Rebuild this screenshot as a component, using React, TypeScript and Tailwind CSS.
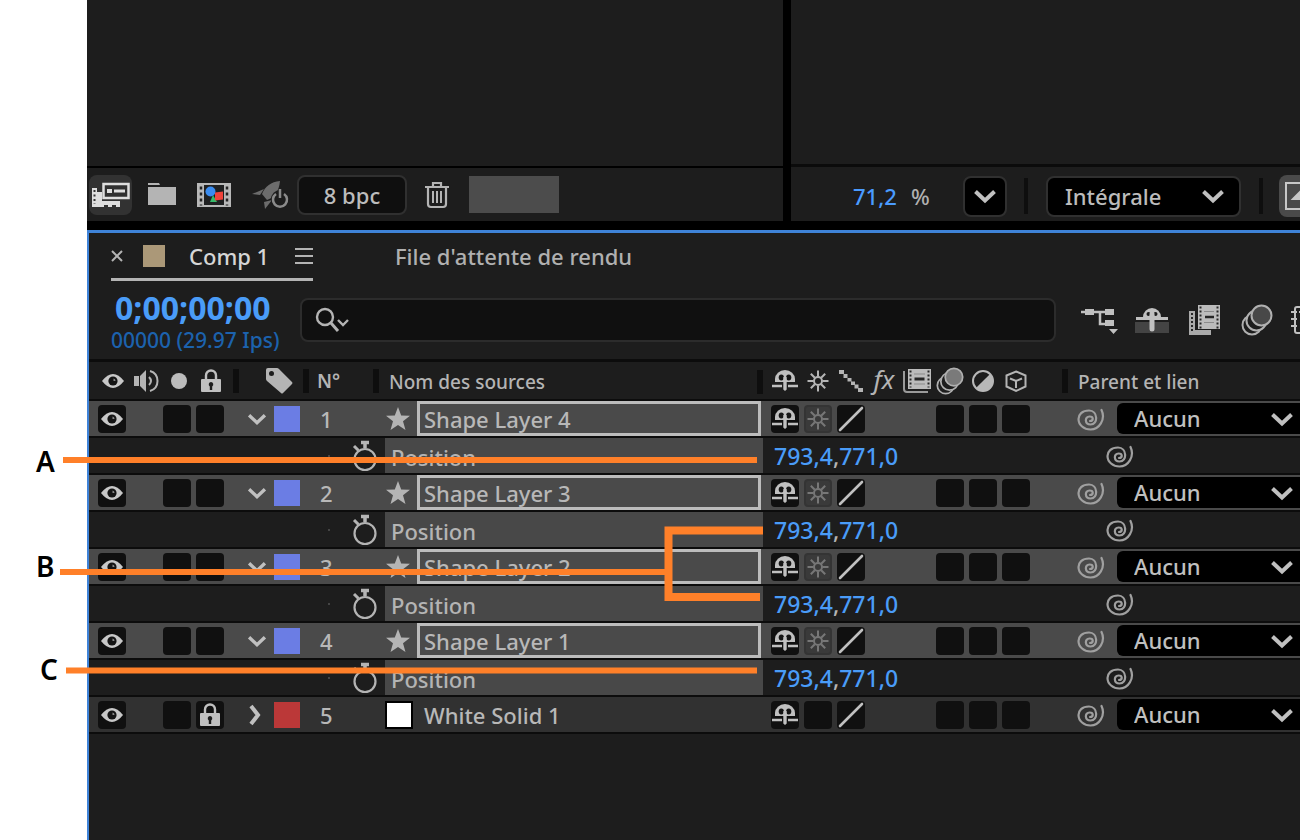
import { useState, type ReactNode } from "react"

/* ----------------------------------------------------------------
 * Data
 * ---------------------------------------------------------------- */

type Layer = {
  id: number
  name: string
  kind: "shape" | "solid"
  position?: [string, string]
}

const layers: Layer[] = [
  { id: 1, name: "Shape Layer 4", kind: "shape", position: ["793,4", "771,0"] },
  { id: 2, name: "Shape Layer 3", kind: "shape", position: ["793,4", "771,0"] },
  { id: 3, name: "Shape Layer 2", kind: "shape", position: ["793,4", "771,0"] },
  { id: 4, name: "Shape Layer 1", kind: "shape", position: ["793,4", "771,0"] },
  { id: 5, name: "White Solid 1", kind: "solid" },
]

/* ----------------------------------------------------------------
 * Icons
 * ---------------------------------------------------------------- */

function EyeIcon() {
  return (
    <svg width="24" height="18" viewBox="0 0 24 18" aria-hidden="true">
      <path d="M1 9Q12-5 23 9Q12 23 1 9Z" fill="#c8c8c8" />
      <circle cx="12" cy="9" r="4.600" fill="#141414" />
      <path d="M12.500 9V6.500A2.500 2.500 0 0 1 14.500 9z" fill="#888" />
    </svg>
  )
}

function SpeakerIcon() {
  return (
    <svg width="28" height="24" viewBox="0 0 28 24" fill="none" stroke="#b4b4b4" strokeWidth="2" aria-hidden="true">
      <path d="M1 7h5v10H1z" fill="#b4b4b4" stroke="none" />
      <path d="M7 7l6-6v22l-6-6z" fill="#b4b4b4" stroke="none" />
      <path d="M16 8q4 4 0 8" />
      <path d="M17 2c10 3 10 17 0 20" />
    </svg>
  )
}

function LockIcon() {
  return (
    <svg width="22" height="24" viewBox="0 0 22 24" aria-hidden="true">
      <path d="M6 11V6.500a5 5 0 0 1 10 0V11" fill="none" stroke="#c0c0c0" strokeWidth="2.400" />
      <rect x="1" y="10" width="20" height="13" rx="1" fill="#c0c0c0" />
      <path d="M11 13a2.400 2.400 0 0 1 1.200 4.400V21H9.800v-3.600A2.400 2.400 0 0 1 11 13z" fill="#1c1c1c" />
    </svg>
  )
}

function TagIcon() {
  return (
    <svg width="28" height="28" viewBox="0 0 28 28" aria-hidden="true">
      <path d="M1 3q0-2 2-2h9q1 0 2 1l13 13q1 1 0 2l-9 9q-1 1-2 0L2 14q-1-1-1-2z" fill="#b4b4b4" />
      <circle cx="6.500" cy="6.500" r="2.500" fill="#1d1d1d" />
    </svg>
  )
}

function ShyIcon() {
  return (
    <svg width="28" height="24" viewBox="0 0 28 24" aria-hidden="true">
      <path d="M4 13V10a10 9 0 0 1 20 0v3z" fill="#c0c0c0" />
      <ellipse cx="10.300" cy="8.500" rx="2.600" ry="3" fill="#151515" />
      <ellipse cx="17.700" cy="8.500" rx="2.600" ry="3" fill="#151515" />
      <path d="M12.300 8h3.400v12.500l-1.700 1.500-1.700-1.500z" fill="#c0c0c0" />
      <path d="M1 17h10M17 17h10" stroke="#c0c0c0" strokeWidth="2.400" />
    </svg>
  )
}

function SunIcon({ dim = false }: { dim?: boolean }) {
  return (
    <svg width="24" height="24" viewBox="0 0 24 24" fill="none" stroke={dim ? "#777" : "#b4b4b4"} strokeWidth="2" aria-hidden="true">
      <circle cx="12" cy="12" r="4" />
      <path d="M12 1.500v6M12 16.500v6M1.500 12h6M16.500 12h6M4.800 4.800l4 4M15.200 15.200l4 4M19.200 4.800l-4 4M8.800 15.200l-4 4" />
    </svg>
  )
}

function QualityIcon() {
  return (
    <svg width="26" height="26" viewBox="0 0 26 26" fill="#b4b4b4" aria-hidden="true">
      <path d="M1 2h5v4H1zM5.500 6h4v4h-4zM9.500 10h4v3.500h-4zM13 13.500h4V17h-4zM16.500 16.500h4v4h-4zM20 20h5v4h-5z" />
    </svg>
  )
}

function SlashIcon() {
  return (
    <svg width="26" height="26" viewBox="0 0 26 26" aria-hidden="true">
      <path d="M2 24L24 2" stroke="#c0c0c0" strokeWidth="2.600" strokeLinecap="round" />
    </svg>
  )
}

function FrameBlendIcon() {
  return (
    <svg width="28" height="26" viewBox="0 0 28 26" aria-hidden="true">
      <path d="M1 3v18q0 3 3 3h21" fill="none" stroke="#9a9a9a" strokeWidth="2" />
      <path d="M5 1h23v20H5z" fill="#bcbcbc" />
      <path d="M7.500 2.500v17M25.500 2.500v17" stroke="#262626" strokeWidth="2" strokeDasharray="2 2" />
      <path d="M11.500 11h10" stroke="#262626" strokeWidth="3" />
      <path d="M11 6h11M11 16h11" stroke="#8b8b8b" strokeWidth="1" />
    </svg>
  )
}

function FilmStackIcon() {
  return (
    <svg width="33" height="33" viewBox="0 0 33 33" aria-hidden="true">
      <path d="M1 7h6v19h16v5H1z" fill="#aaa" />
      <path d="M4 9v20" stroke="#262626" strokeWidth="2" strokeDasharray="2 2" />
      <path d="M9 0h24v26H9z" fill="#1d1d1d" />
      <path d="M10 1h22v24H10z" fill="#bcbcbc" />
      <path d="M12.500 2.500v22M29.500 2.500v22" stroke="#262626" strokeWidth="2" strokeDasharray="2 2" />
      <path d="M17 13h9" stroke="#262626" strokeWidth="2.500" />
      <path d="M16 7.500h10M16 18.500h10" stroke="#8b8b8b" strokeWidth="1" />
    </svg>
  )
}

function MotionBlurIcon({ large = false }: { large?: boolean }) {
  return (
    <svg width={large ? 32 : 28} height={large ? 32 : 28} viewBox="0 0 32 32" stroke="#b0b0b0" strokeWidth="2" aria-hidden="true">
      <circle cx="11" cy="21" r="9.500" fill="#1d1d1d" />
      <circle cx="15.500" cy="16.500" r="10" fill="#1d1d1d" />
      <circle cx="20.500" cy="11.500" r="10" fill={large ? "#484848" : "#7a7a7a"} />
    </svg>
  )
}

function AdjustmentIcon() {
  return (
    <svg width="24" height="24" viewBox="0 0 24 24" aria-hidden="true">
      <circle cx="12" cy="12" r="10" fill="#1d1d1d" stroke="#b8b8b8" strokeWidth="2" />
      <path d="M19.100 4.900A10 10 0 0 1 4.900 19.100z" fill="#b8b8b8" />
    </svg>
  )
}

function CubeIcon() {
  return (
    <svg width="24" height="24" viewBox="0 0 24 24" fill="none" stroke="#b4b4b4" strokeWidth="2" aria-hidden="true">
      <path d="M12 2.500l9.500 4v11L12 22l-9.500-4.500v-11zM6 9.500l6 2.500 6-2.500M12 12v7" />
    </svg>
  )
}

function PickWhipIcon() {
  return (
    <svg width="28" height="26" viewBox="0 0 28 26" fill="none" stroke="#a0a0a0" strokeWidth="2.200" strokeLinecap="round" aria-hidden="true">
      <path d="M13 15c3.500 0 4-4.500-.5-4.500-5 0-5 8 1 8 8 0 7.500-14-1.500-14C5 4.500 1.500 8.500 1.500 13c0 6 5.500 10.500 12 10.500C22 23.500 29 13.500 24.500 4" />
    </svg>
  )
}

function StopwatchIcon() {
  return (
    <svg width="26" height="32" viewBox="0 0 26 32" fill="none" stroke="#b4b4b4" aria-hidden="true">
      <circle cx="13" cy="19.500" r="10.500" strokeWidth="2.200" />
      <path d="M9 2.500h8M13 3v5" strokeWidth="3.500" />
      <path d="M2 6l4.500 4.500" strokeWidth="3" />
    </svg>
  )
}

function StarIcon() {
  return (
    <svg width="26" height="26" viewBox="0 0 26 26" aria-hidden="true">
      <path d="M13 1l3.200 8.500 8.800.3-7 5.500 2.500 8.700L13 19l-7.500 5L8 15.300 1 9.800l8.800-.3z" fill="#b4b4b4" />
    </svg>
  )
}

function Chevron({ small = false, right = false }: { small?: boolean; right?: boolean }) {
  return (
    <svg width={small ? 20 : 24} height={small ? 20 : 24} viewBox="0 0 24 24" fill="none" stroke="#c0c0c0" strokeWidth="4" aria-hidden="true">
      {right ? <path d="M4 3l7 9-7 9" /> : <path d="M2.500 7.500l9.500 9 9.500-9" />}
    </svg>
  )
}

function ProjectCompIcon() {
  return (
    <svg width="40" height="28" viewBox="0 0 40 28" aria-hidden="true">
      <path d="M1 7h5v4h5v9h18v6h-4v-2h-4v2h-4v-2h-4v2H1z" fill="#dedede" />
      <path d="M3.500 9v14" stroke="#333" strokeWidth="2" strokeDasharray="2 2.500" />
      <rect x="12.500" y="3" width="25" height="14" fill="#303030" stroke="#dedede" strokeWidth="2.500" />
      <path d="M16 8h5v4h-5zM23 8.500h11v3H23z" fill="#dedede" />
    </svg>
  )
}

function FolderIcon() {
  return (
    <svg width="30" height="26" viewBox="0 0 30 26" fill="#b4b4b4" aria-hidden="true">
      <path d="M1 1h11l1 2H1zM1 5h28v18H1z" />
    </svg>
  )
}

function ColorFilmIcon() {
  return (
    <svg width="34" height="24" viewBox="0 0 34 24" aria-hidden="true">
      <path d="M1 1h32v22H1z" fill="#1f2021" stroke="#b8b8b8" strokeWidth="2" />
      <path d="M1 1h6v22H1zM27 1h6v22h-6z" fill="#b8b8b8" />
      <path d="M4 3.500v19M30 3.500v19" stroke="#222" strokeWidth="2.500" strokeDasharray="3 3" />
      <path d="M16 12l4 7h-7z" fill="#35b96a" />
      <circle cx="13.500" cy="8.500" r="5" fill="#3a8cf0" />
      <path d="M18 9.500l8-1v8l-8 1z" fill="#f0433a" />
    </svg>
  )
}

function RocketIcon() {
  return (
    <svg width="38" height="30" viewBox="0 0 38 30" aria-hidden="true">
      <path d="M29 1c-9 1-15 5-18 13l5 6c8-3 12-9 13-19z" fill="#6c6c6c" />
      <path d="M13 9L1 14l8 1zM13 22l1 7 7-9z" fill="#6c6c6c" />
      <circle cx="29" cy="19" r="9" fill="#1d1d1d" />
      <path d="M25 14a7 7 0 1 0 8 0M29 9v9" fill="none" stroke="#8b8b8b" strokeWidth="2.500" />
    </svg>
  )
}

function TrashIcon() {
  return (
    <svg width="24" height="28" viewBox="0 0 24 28" fill="none" stroke="#b4b4b4" strokeWidth="2.200" aria-hidden="true">
      <path d="M0 6h24M8 5V2h8v3M3 7v16q0 3 3 3h12q3 0 3-3V7" />
      <path d="M8 10v12M12 10v12M16 10v12" strokeWidth="2" />
    </svg>
  )
}

function FlowchartIcon() {
  return (
    <svg width="38" height="32" viewBox="0 0 38 32" fill="#c0c0c0" aria-hidden="true">
      <path d="M0 8h26M19 8v12h6" fill="none" stroke="#c0c0c0" strokeWidth="2.500" />
      <path d="M4 5h9v6H4zM24 5h9v6h-9zM24 16h9v6h-9zM28 25h9l-4.500 5z" />
    </svg>
  )
}

function ShyToolIcon() {
  return (
    <svg width="36" height="32" viewBox="0 0 36 32" aria-hidden="true">
      <path d="M1 18h34v11H1z" fill="#444" />
      <path d="M9 13a9 9 0 0 1 18 0z" fill="#c0c0c0" />
      <circle cx="14.500" cy="10" r="2" fill="#1d1d1d" />
      <circle cx="21.500" cy="10" r="2" fill="#1d1d1d" />
      <path d="M2 14.500h32" stroke="#c0c0c0" strokeWidth="3" />
      <path d="M18 10v15" stroke="#c0c0c0" strokeWidth="5" strokeLinecap="round" />
    </svg>
  )
}

function GraphIcon() {
  return (
    <svg width="32" height="32" viewBox="0 0 32 32" fill="none" stroke="#c0c0c0" strokeWidth="2" aria-hidden="true">
      <rect x="4" y="3" width="25" height="26" rx="2" />
      <path d="M0 8h6M0 15h6M0 22h6M10 1v5M17 1v5M8 8h10" />
    </svg>
  )
}

/* ----------------------------------------------------------------
 * Shared pieces
 * ---------------------------------------------------------------- */

function Switch({ label, dim = false, children }: { label: string; dim?: boolean; children?: ReactNode }) {
  return (
    <button
      aria-label={label}
      className={
        dim
          ? "flex size-7 shrink-0 items-center justify-center rounded border-2 border-[#343434] bg-[#3a3a3a]"
          : "flex size-7 shrink-0 items-center justify-center rounded bg-[#101010]"
      }
    >
      {children}
    </button>
  )
}

function Separator() {
  return <span className="h-6 w-1.5 shrink-0 bg-[#0e0e0e]" />
}

/* ----------------------------------------------------------------
 * Top panels
 * ---------------------------------------------------------------- */

function ProjectPanel() {
  return (
    <section className="flex w-[696px] flex-col bg-[#1d1d1d]">
      <div className="h-[166px]" />
      <div className="flex h-[55px] items-center border-t-2 border-black pl-0.5">
        <button aria-label="Interpréter un métrage" className="flex h-10 w-[43px] items-center justify-center rounded-lg bg-[#323232]">
          <ProjectCompIcon />
        </button>
        <button aria-label="Nouveau dossier" className="ml-[15px]"><FolderIcon /></button>
        <button aria-label="Nouvelle composition" className="ml-5"><ColorFilmIcon /></button>
        <button aria-label="Accélération" className="ml-5"><RocketIcon /></button>
        <button className="ml-2 h-10 w-[110px] rounded-lg border-2 border-[#303030] bg-[#0f0f0f] text-[#bcbcbc]">
          8 bpc
        </button>
        <button aria-label="Supprimer" className="ml-[18px]"><TrashIcon /></button>
        <div className="ml-5 h-[37px] w-[90px] bg-[#4c4c4c]" />
      </div>
    </section>
  )
}

function ViewerPanel() {
  return (
    <section className="flex min-w-0 flex-1 flex-col overflow-hidden bg-[#1d1d1d]">
      <div className="h-[164px]" />
      <div className="flex h-[57px] items-center border-t-3 border-[#0b0b0b] pt-1 pl-[62px]">
        <button className="w-12 shrink-0 text-left text-[#4a9bff]">71,2</button>
        <span className="ml-2.5 w-6 shrink-0 text-[#b0b0b0]">%</span>
        <button aria-label="Zoom" className="ml-7 flex h-[41px] w-11 shrink-0 items-center justify-center rounded-lg border-2 border-[#303030] bg-black">
          <Chevron />
        </button>
        <span className="ml-[17px] h-9 w-1 shrink-0 bg-[#0e0e0e]" />
        <div className="relative ml-[18px] shrink-0">
          <select aria-label="Résolution" className="block h-[41px] w-[195px] appearance-none rounded-lg border-2 border-[#303030] bg-black pl-[17px] text-[#bcbcbc]">
            <option>Intégrale</option>
          </select>
          <span className="pointer-events-none absolute top-2 right-4"><Chevron /></span>
        </div>
        <span className="ml-[18px] h-9 w-1 shrink-0 bg-[#0e0e0e]" />
        <button aria-label="Région ciblée" className="ml-4 flex h-[42px] w-11 shrink-0 items-center rounded-lg bg-[#4a4a4a] pl-1.5">
          <svg width="30" height="28" viewBox="0 0 30 28" fill="none" stroke="#c8c8c8" strokeWidth="2" aria-hidden="true">
            <path d="M1 1h28v26H1z" />
            <path d="M8 17l7-7 7 7z" fill="#c8c8c8" />
          </svg>
        </button>
      </div>
    </section>
  )
}

/* ----------------------------------------------------------------
 * Timeline
 * ---------------------------------------------------------------- */

function TimelineTabs() {
  return (
    <div className="flex h-[48px] items-end pl-[22px]">
      <div className="flex h-full w-[202px] items-center border-b-3 border-[#b4b4b4]">
        <button aria-label="Fermer" className="flex w-3 justify-center">
          <svg width="12" height="12" viewBox="0 0 12 12" stroke="#b4b4b4" strokeWidth="2" aria-hidden="true">
            <path d="M1 1l10 10M11 1L1 11" />
          </svg>
        </button>
        <span className="ml-5 size-[22px] bg-[#ab9878]" />
        <button className="ml-6 text-[#d6d6d6]">Comp 1</button>
        <button aria-label="Menu du panneau" className="ml-auto">
          <svg width="18" height="18" viewBox="0 0 18 18" stroke="#b4b4b4" strokeWidth="2" aria-hidden="true">
            <path d="M0 2h18M0 9h18M0 16h18" />
          </svg>
        </button>
      </div>
      <button className="ml-[82px] h-full pb-[3px] text-[#b0b0b0]">File d'attente de rendu</button>
    </div>
  )
}

function TimelineToolbar() {
  return (
    <div className="flex h-[78px] items-center overflow-hidden">
      <div className="w-[211px] shrink-0 pt-2 pl-[22px]">
        <button className="block pl-1 text-[32px] leading-8 font-bold text-[#4a9cf8]">0;00;00;00</button>
        <div className="text-[21px] leading-8 whitespace-nowrap text-[#1c62ad]">00000 (29.97 Ips)</div>
      </div>
      <label className="flex h-11 w-[756px] shrink-0 items-center rounded-lg border-2 border-[#2c2c2c] bg-[#101010] pl-3">
        <svg width="36" height="28" viewBox="0 0 36 28" fill="none" stroke="#b4b4b4" strokeWidth="2.400" aria-hidden="true">
          <circle cx="11" cy="11" r="8" />
          <path d="M17 17l7 8" strokeWidth="3" />
          <path d="M24 14l5 5 5-5" />
        </svg>
        <input aria-label="Rechercher" className="min-w-0 flex-1 bg-transparent text-[#b8b8b8] outline-none" />
      </label>
      <div className="ml-[25px] flex shrink-0 items-center">
        <button aria-label="Mini-diagramme"><FlowchartIcon /></button>
        <button aria-label="Masquer les calques discrets" className="ml-[15px]"><ShyToolIcon /></button>
        <button aria-label="Fusion d'images" className="ml-[18px]"><FilmStackIcon /></button>
        <button aria-label="Flou de mouvement" className="ml-5"><MotionBlurIcon large /></button>
        <button aria-label="Éditeur de graphiques" className="ml-[18px]"><GraphIcon /></button>
      </div>
    </div>
  )
}

function HeaderRow() {
  return (
    <tr className="text-left text-[19px] leading-6 text-[#b4b4b4]">
      <th className="h-[39px] border-b-2 border-[#0c0c0c] p-0 font-medium">
        <div className="flex items-center pl-3">
          <EyeIcon />
          <span className="ml-2"><SpeakerIcon /></span>
          <span className="ml-2.5 size-4 rounded-full bg-[#bcbcbc]" />
          <span className="ml-[13px]"><LockIcon /></span>
          <span className="mr-1.5 ml-auto flex"><Separator /></span>
        </div>
      </th>
      <th className="border-b-2 border-[#0c0c0c] p-0 font-medium">
        <div className="pl-5"><TagIcon /></div>
      </th>
      <th className="border-b-2 border-[#0c0c0c] p-0 font-medium">
        <div className="flex items-center pl-[3px]">
          <Separator />
          <span className="ml-2 font-semibold">N°</span>
          <span className="mr-1.5 ml-auto flex"><Separator /></span>
        </div>
      </th>
      <th className="border-b-2 border-[#0c0c0c] p-0 font-medium">
        <div className="flex items-center justify-between pt-0.5 pl-1">
          Nom des sources
          <Separator />
        </div>
      </th>
      <th className="border-b-2 border-[#0c0c0c] p-0 font-medium">
        <div className="flex items-center gap-[5px] pl-2">
          <span className="flex w-7 justify-center"><ShyIcon /></span>
          <span className="flex w-7 justify-center"><SunIcon /></span>
          <span className="flex w-7 justify-center"><QualityIcon /></span>
          <span className="w-7 pb-1 text-center text-[26px] font-normal italic">fx</span>
          <span className="flex w-7 justify-center"><FrameBlendIcon /></span>
          <span className="flex w-7 justify-center"><MotionBlurIcon /></span>
          <span className="flex w-7 justify-center"><AdjustmentIcon /></span>
          <span className="flex w-7 justify-center"><CubeIcon /></span>
          <span className="ml-auto flex"><Separator /></span>
        </div>
      </th>
      <th className="border-b-2 border-[#0c0c0c] p-0 pt-0.5 pl-2.5 font-medium">Parent et lien</th>
    </tr>
  )
}

function LayerRow({ layer }: { layer: Layer }) {
  const [name, setName] = useState(layer.name)
  const isShape = layer.kind === "shape"

  return (
    <tr className={isShape ? "bg-[#4a4a4a] text-[#b8b8b8]" : "bg-[#313131] text-[#b8b8b8]"}>
      <td className="h-[37px] border-b-2 border-[#0c0c0c] p-0">
        <div className="flex items-center pl-[9px]">
          <Switch label="Visibilité"><EyeIcon /></Switch>
          <span className="ml-[37px] flex gap-[5px]">
            <Switch label="Solo" />
            <Switch label="Verrouiller">{!isShape && <LockIcon />}</Switch>
          </span>
        </div>
      </td>
      <td className="border-b-2 border-[#0c0c0c] p-0">
        <div className="flex items-center justify-between pl-0.5">
          <button aria-label="Développer"><Chevron small={isShape} right={!isShape} /></button>
          <span className={isShape ? "size-[26px] bg-[#6b7de4]" : "size-[26px] bg-[#bb3838]"} />
        </div>
      </td>
      <td className="border-b-2 border-[#0c0c0c] p-0 pl-5">{layer.id}</td>
      <td className="border-b-2 border-[#0c0c0c] p-0">
        {isShape ? (
          <div className="flex items-center gap-1.5 pr-0.5">
            <StarIcon />
            <input
              aria-label="Nom du calque"
              value={name}
              onChange={(e) => setName(e.target.value)}
              className="h-[35px] min-w-0 flex-1 border-3 border-[#bcbcbc] bg-transparent pl-1 outline-none"
            />
          </div>
        ) : (
          <div className="flex items-center">
            <span className="size-7 border-2 border-black bg-white" />
            <span className="ml-[11px]">{layer.name}</span>
          </div>
        )}
      </td>
      <td className="border-b-2 border-[#0c0c0c] p-0">
        <div className="flex gap-[5px] pl-2">
          <Switch label="Discret"><ShyIcon /></Switch>
          <Switch label="Pixellisation" dim={isShape}>{isShape && <SunIcon dim />}</Switch>
          <Switch label="Qualité"><SlashIcon /></Switch>
          <span className="ml-[66px] flex gap-[5px]">
            <Switch label="Flou de mouvement" />
            <Switch label="Calque d'effets" />
            <Switch label="Calque 3D" />
          </span>
        </div>
      </td>
      <td className="border-b-2 border-[#0c0c0c] p-0">
        <div className="flex items-center pl-[9px]">
          <button aria-label="Icône de sélection"><PickWhipIcon /></button>
          <div className="relative ml-3 min-w-[183px] flex-1">
            <select aria-label="Parent" className="block h-[31px] w-full appearance-none rounded-l-md bg-black pl-[17px] leading-[31px] text-[#c0c0c0]">
              <option>Aucun</option>
            </select>
            <span className="pointer-events-none absolute top-1 right-1.5"><Chevron /></span>
          </div>
        </div>
      </td>
    </tr>
  )
}

function PositionRow({ value }: { value: [string, string] }) {
  return (
    <tr className="text-[#b4b4b4]">
      <td colSpan={3} className="h-[37px] border-b-2 border-[#0c0c0c] p-0">
        <div className="flex items-center justify-end pr-[7px]">
          <span className="mr-[22px] size-0.5 bg-[#444]" />
          <button aria-label="Chronomètre"><StopwatchIcon /></button>
        </div>
      </td>
      <td className="border-b-2 border-[#0c0c0c] bg-[#484848] p-0 pt-0.5 pl-1.5">Position</td>
      <td className="border-b-2 border-[#0c0c0c] p-0 pl-[11px] text-[23px]">
        <span className="text-[#4a9cf8]">{value[0]}</span>,
        <span className="text-[#4a9cf8]">{value[1]}</span>
      </td>
      <td className="border-b-2 border-[#0c0c0c] p-0 pl-[38px]">
        <button aria-label="Icône de sélection" className="block"><PickWhipIcon /></button>
      </td>
    </tr>
  )
}

function LayerTable() {
  return (
    <table className="w-full table-fixed border-separate border-spacing-0 border-t-3 border-[#0c0c0c] leading-8">
      <colgroup>
        <col className="w-[156px]" />
        <col className="w-[55px]" />
        <col className="w-[85px]" />
        <col className="w-[378px]" />
        <col className="w-[305px]" />
        <col />
      </colgroup>
      <thead>
        <HeaderRow />
      </thead>
      {layers.map((layer) => (
        <tbody key={layer.id}>
          <LayerRow layer={layer} />
          {layer.position && <PositionRow value={layer.position} />}
        </tbody>
      ))}
    </table>
  )
}

/* ----------------------------------------------------------------
 * Callouts drawn over the panels
 * ---------------------------------------------------------------- */

function Callouts() {
  return (
    <div className="pointer-events-none absolute inset-0 text-[28px] leading-7 font-semibold text-black">
      <svg className="absolute inset-0 size-full" fill="none" stroke="#ff8029" aria-hidden="true">
        <path d="M63 460H757M60 572H666M66 670.500H757" strokeWidth="6" />
        <path d="M763 530.500H668.500V597H760" strokeWidth="8" />
      </svg>
      <span className="absolute top-[447px] left-9">A</span>
      <span className="absolute top-[552px] left-9">B</span>
      <span className="absolute top-[655px] left-10">C</span>
    </div>
  )
}

export default function App() {
  return (
    <div className="relative flex min-h-screen overflow-hidden bg-white pl-[87px] font-['Noto_Sans',sans-serif] text-[22px] leading-8 font-medium">
      <main className="flex min-w-0 flex-1 flex-col bg-black">
        <div className="flex gap-2 pb-[9px]">
          <ProjectPanel />
          <ViewerPanel />
        </div>
        <section className="flex-1 overflow-hidden border-t-3 border-l-2 border-[#3f83d8] bg-[#1d1d1d]">
          <TimelineTabs />
          <TimelineToolbar />
          <LayerTable />
        </section>
      </main>
      <Callouts />
    </div>
  )
}
